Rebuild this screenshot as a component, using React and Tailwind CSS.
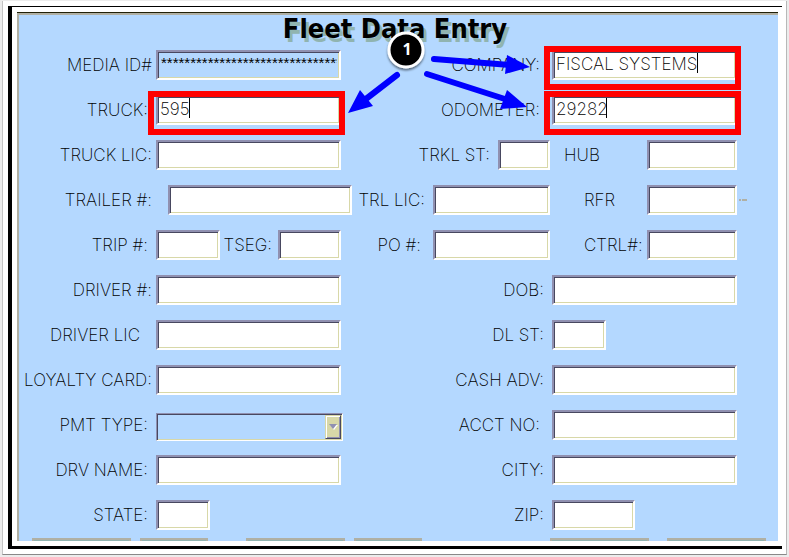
import React from "react";

const FIELD =
  "block h-[30px] w-full min-w-0 rounded-none border-2 border-t-[#9090b0] border-l-[#9090b0] border-r-white border-b-white px-[2px] leading-5 text-black outline-none shadow-[inset_1px_1px_0_#484860,inset_-1px_-1px_0_#d8d8a8]";
const OPEN = "bg-white pb-[3px] text-[17px] font-extralight";
const MASKED = "bg-[#b4d8ff] pb-[6px] pl-[3px] font-['Liberation_Sans',sans-serif] text-[15px]";

function Label({ id, className, children }) {
  return (
    <label htmlFor={id} className={`shrink-0 whitespace-nowrap ${className}`}>
      {children}
    </label>
  );
}

function Field({ id, className = "flex-1", value = "", locked = false, caret, highlight }) {
  return (
    <div className={`relative min-w-0 ${className}`}>
      <input
        id={id}
        type="text"
        defaultValue={value}
        readOnly={locked}
        className={`${FIELD} ${locked ? MASKED : OPEN}`}
      />
      {caret && <span className={`absolute top-[3px] h-5 w-px bg-black ${caret}`} />}
      {highlight && (
        <span className="pointer-events-none absolute -top-1 -right-1 -bottom-[10px] -left-2 border-[6px] border-[#ff0000]" />
      )}
    </div>
  );
}

function Row({ children }) {
  return <div className="grid grid-cols-[333fr_385fr] grid-rows-[30px] pr-[41px]">{children}</div>;
}

function Half({ children }) {
  return <div className="flex min-w-0 items-center">{children}</div>;
}

const L = "w-[137px] text-right";
const R = "w-[200px] text-right";
const ACTION = "h-6 shrink-0 border-2 border-[#b0b0a4] bg-[#90b4b0]";

export default function App() {
  return (
    <div className="bg-[#ececec] px-[2px] pt-px pb-[3px] font-['Inter','Liberation_Sans',sans-serif] text-[17px] leading-5 font-extralight text-black">
      <main className="border-r border-b border-l border-r-[#b8b8b8] border-b-[#888] border-l-[#c4c4c4] bg-white pt-[5px] pr-1 pb-[5px] pl-[5px]">
        <div className="border-t border-b-[3px] border-l-4 border-black pt-[5px] pr-1 pb-[5px] pl-[5px]">
          <div className="relative border-t border-[#202008] bg-[#b4d8ff]">
            <div className="border-t-2 border-l-2 border-[#b0b0a4]">
              <h1 className="h-[35px] pr-[7px] text-center font-['DejaVu_Sans_Condensed','DejaVu_Sans',sans-serif] text-[27px] leading-[28px] font-bold [text-shadow:3px_4px_0_#90b4b0]">
                Fleet Data Entry
              </h1>

              <form className="flex flex-col gap-[15px]" onSubmit={(e) => e.preventDefault()}>
                <Row>
                  <Half>
                    <Label id="media" className={`${L} pr-1`}>MEDIA ID#</Label>
                    <Field id="media" locked value="********************************" className="mr-[11px] flex-1" />
                  </Half>
                  <Half>
                    <Label id="company" className={`${R} pr-3`}>COMPANY:</Label>
                    <Field id="company" value="FISCAL SYSTEMS" caret="left-[145px]" highlight />
                  </Half>
                </Row>
                <Row>
                  <Half>
                    <Label id="truck" className={`${L} pr-2`}>TRUCK:</Label>
                    <Field id="truck" value="595" caret="left-[33px]" highlight className="mr-[11px] flex-1" />
                  </Half>
                  <Half>
                    <Label id="odometer" className={`${R} pr-3`}>ODOMETER:</Label>
                    <Field id="odometer" value="29282" caret="left-[54px]" highlight />
                  </Half>
                </Row>
                <Row>
                  <Half>
                    <Label id="trucklic" className={`${L} pr-1`}>TRUCK LIC:</Label>
                    <Field id="trucklic" className="mr-[11px] flex-1" />
                  </Half>
                  <Half>
                    <Label id="trklst" className="w-[146px] pr-2 text-right">TRKL ST:</Label>
                    <Field id="trklst" />
                    <Label id="hub" className="w-[97px] pl-[14px]">HUB</Label>
                    <Field id="hub" className="w-[90px]" />
                  </Half>
                </Row>
                <Row>
                  <Half>
                    <Label id="trailer" className="w-[149px] pr-4 text-right">TRAILER #:</Label>
                    <Field id="trailer" />
                  </Half>
                  <Half>
                    <Label id="trllic" className="w-[81px] pr-2 text-right">TRL LIC:</Label>
                    <Field id="trllic" />
                    <Label id="rfr" className="w-[97px] pl-[34px]">RFR</Label>
                    <div className="relative w-[90px]">
                      <Field id="rfr" className="w-full" />
                      <span className="absolute top-[14px] -right-[10px] flex gap-px">
                        <span className="h-[2px] w-[2px] bg-[#b0b0a4]" />
                        <span className="h-[2px] w-[5px] bg-[#b0b0a4]" />
                      </span>
                    </div>
                  </Half>
                </Row>
                <Row>
                  <Half>
                    <Label id="trip" className={`${L} pr-2`}>TRIP #:</Label>
                    <Field id="trip" />
                    <Label id="tseg" className="w-[58px] pl-1">TSEG:</Label>
                    <Field id="tseg" className="mr-[11px] flex-1" />
                  </Half>
                  <Half>
                    <Label id="po" className="w-[81px] pr-3 text-right">PO #:</Label>
                    <Field id="po" />
                    <Label id="ctrl" className="w-[97px] pl-[34px]">CTRL#:</Label>
                    <Field id="ctrl" className="w-[90px]" />
                  </Half>
                </Row>
                <Row>
                  <Half>
                    <Label id="driver" className={`${L} pr-1`}>DRIVER #:</Label>
                    <Field id="driver" className="mr-[11px] flex-1" />
                  </Half>
                  <Half>
                    <Label id="dob" className={`${R} pr-2`}>DOB:</Label>
                    <Field id="dob" />
                  </Half>
                </Row>
                <Row>
                  <Half>
                    <Label id="driverlic" className={`${L} pr-4`}>DRIVER LIC</Label>
                    <Field id="driverlic" className="mr-[11px] flex-1" />
                  </Half>
                  <Half>
                    <Label id="dlst" className={`${R} pr-2`}>DL ST:</Label>
                    <Field id="dlst" className="w-[54px]" />
                  </Half>
                </Row>
                <Row>
                  <Half>
                    <Label id="loyalty" className={`${L} pr-1`}>LOYALTY CARD:</Label>
                    <Field id="loyalty" className="mr-[11px] flex-1" />
                  </Half>
                  <Half>
                    <Label id="cash" className={`${R} pr-2`}>CASH ADV:</Label>
                    <Field id="cash" />
                  </Half>
                </Row>
                <Row>
                  <Half>
                    <Label id="pmt" className={`${L} pr-2`}>PMT TYPE:</Label>
                    <div className="relative mt-1 mr-[9px] min-w-0 flex-1">
                      <select
                        id="pmt"
                        className="block h-7 w-full appearance-none rounded-none border border-t-[#9090b0] border-r-white border-b-white border-l-[#9090b0] bg-[#b4d8ff] shadow-[inset_1px_1px_0_#484860,inset_-1px_-1px_0_#d8d8a8]"
                      >
                        <option></option>
                      </select>
                      <span className="pointer-events-none absolute top-[2px] right-[2px] bottom-[2px] flex w-4 items-center justify-center border border-t-[#d8d8a8] border-r-[#484860] border-b-[#484860] border-l-[#d8d8a8] bg-[#d8d8a8] shadow-[inset_1px_1px_0_#fff,inset_-1px_-1px_0_#9090b0]">
                        <svg width="9" height="6" viewBox="0 0 9 6">
                          <path d="M1 1h8L5 6z" fill="#fff" />
                          <path d="M0 0h8L4 5z" fill="#9090b0" />
                        </svg>
                      </span>
                    </div>
                  </Half>
                  <Half>
                    <Label id="acct" className={`${R} pr-3`}>ACCT NO:</Label>
                    <Field id="acct" />
                  </Half>
                </Row>
                <Row>
                  <Half>
                    <Label id="drvname" className={`${L} pr-2`}>DRV NAME:</Label>
                    <Field id="drvname" className="mr-[11px] flex-1" />
                  </Half>
                  <Half>
                    <Label id="city" className={`${R} pr-2`}>CITY:</Label>
                    <Field id="city" />
                  </Half>
                </Row>
                <Row>
                  <Half>
                    <Label id="state" className={`${L} pr-2`}>STATE:</Label>
                    <Field id="state" className="w-[54px]" />
                  </Half>
                  <Half>
                    <Label id="zip" className={`${R} pr-2`}>ZIP:</Label>
                    <Field id="zip" className="w-[83px]" />
                  </Half>
                </Row>
              </form>

              <div className="mt-2 flex h-[3px] overflow-hidden pr-3 pl-[13px]">
                <button type="button" aria-label="Action 1" className={`${ACTION} w-[99px]`} />
                <button type="button" aria-label="Action 2" className={`${ACTION} ml-[9px] w-[68px]`} />
                <button type="button" aria-label="Action 3" className={`${ACTION} ml-[38px] w-[99px]`} />
                <button type="button" aria-label="Action 4" className={`${ACTION} ml-[9px] w-[68px]`} />
                <button type="button" aria-label="Action 5" className={`${ACTION} ml-auto w-[99px]`} />
                <button type="button" aria-label="Action 6" className={`${ACTION} ml-[18px] w-[99px]`} />
              </div>
            </div>

            <svg className="pointer-events-none absolute top-0 left-0" width="761" height="120" viewBox="17 13 761 120">
              <defs>
                <filter id="drop" x="-30%" y="-30%" width="160%" height="160%">
                  <feDropShadow dx="0" dy="2" stdDeviation="1" floodColor="#000" floodOpacity="0.5" />
                </filter>
              </defs>
              <g stroke="#0000ff" strokeWidth="6" strokeLinecap="round" fill="#0000ff">
                <path d="M397 75 362 102M434 59 510 65M427 74 508 100" />
                <path stroke="none" d="M348 113 360 90 373 106zM530 67 505 74 507 55zM527 107 500 109 507 90z" />
              </g>
              <circle cx="406" cy="50" r="17" fill="#000" stroke="#fff" strokeWidth="3" filter="url(#drop)" />
              <text x="407" y="55" textAnchor="middle" fill="#fff" className="font-['Open_Sans',sans-serif] text-[16px] font-bold">
                1
              </text>
            </svg>
          </div>
        </div>
      </main>
    </div>
  );
}
